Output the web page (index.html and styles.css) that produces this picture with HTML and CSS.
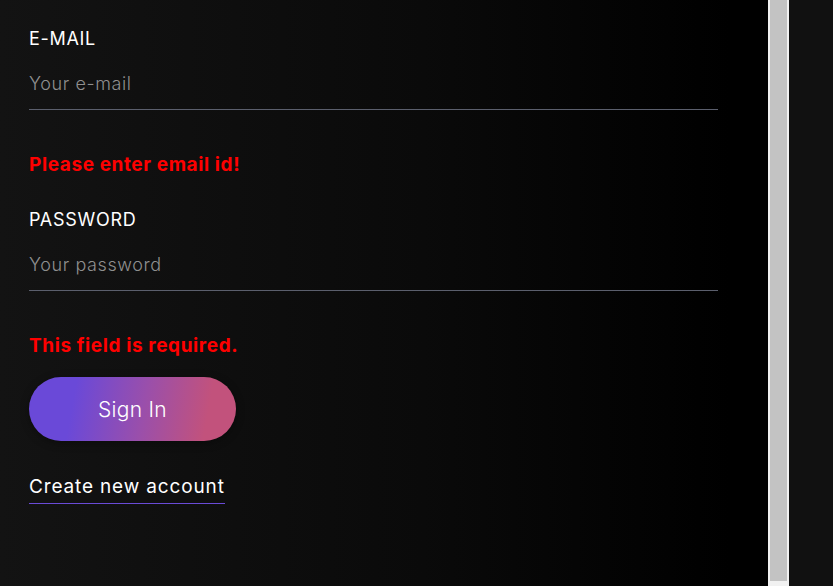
FILE: index.html
```html
<!DOCTYPE html>
<html lang="en">
<head>
<meta charset="utf-8">
<title>Sign In</title>
<link rel="stylesheet" href="styles.css">
</head>
<body>
<div class="page">
  <main class="panel">
    <form class="form" novalidate>
      <div class="field">
        <label class="label" for="email">E-MAIL</label>
        <input class="input" id="email" type="email" placeholder="Your e-mail">
      </div>
      <p class="error error-email">Please enter email id!</p>
      <div class="field field-pass">
        <label class="label" for="password">PASSWORD</label>
        <input class="input" id="password" type="password" placeholder="Your password">
      </div>
      <p class="error error-pass">This field is required.</p>
      <button class="btn" type="button">Sign In</button>
      <a class="link" href="#">Create new account</a>
    </form>
  </main>
  <div class="scrollbar"><div class="thumb"></div></div>
  <aside class="side"></aside>
</div>
</body>
</html>
```
FILE: styles.css
```css
* { box-sizing: border-box; }
html, body { margin: 0; padding: 0; height: 100%; }
body {
  background: #111111;
  font-family: Inter, "Noto Sans", sans-serif;
  overflow: hidden;
}
.page {
  display: flex;
  height: 586px;
}
.panel {
  width: 768px;
  flex: 0 0 768px;
  background: linear-gradient(to right, #131313 0%, #0a0a0a 55%, #000000 95%);
  padding: 28px 0 0 29px;
}
.form {
  width: 689px;
  display: flex;
  flex-direction: column;
  align-items: flex-start;
}
.field {
  width: 100%;
  display: flex;
  flex-direction: column;
}
.label {
  font-size: 18px;
  line-height: 22px;
  color: #ffffff;
  font-weight: 400;
  letter-spacing: 0.7px;
}
.input {
  margin-top: 8px;
  height: 52px;
  width: 100%;
  background: transparent;
  border: 0;
  border-bottom: 1px solid #5b5f6d;
  padding: 0;
  font-family: inherit;
  font-size: 18px;
  font-weight: 300;
  letter-spacing: 0.6px;
  color: #ffffff;
  outline: none;
}
.input::placeholder {
  color: #8f8f8f;
  opacity: 1;
}
.error {
  margin: 43px 0 0;
  color: #ff0000;
  font-size: 19px;
  line-height: 24px;
  font-weight: 700;
  letter-spacing: 0.6px;
}
.field-pass { margin-top: 32px; }
.btn {
  margin-top: 19px;
  width: 207px;
  height: 64px;
  border: 0;
  border-radius: 32px;
  background: linear-gradient(100deg, #6a49d8 22%, #9a4fab 55%, #c2527c 85%);
  color: #ffffff;
  font-family: inherit;
  font-size: 21px;
  font-weight: 300;
  letter-spacing: 0.3px;
  cursor: pointer;
  box-shadow: 0 2px 8px rgba(0, 0, 0, 0.35);
}
.link {
  margin-top: 34px;
  color: #ffffff;
  text-decoration: none;
  font-size: 19px;
  line-height: 24px;
  font-weight: 400;
  letter-spacing: 0.85px;
  padding-bottom: 4px;
  border-bottom: 1px solid #6a4bd7;
}
.scrollbar {
  flex: 0 0 21px;
  background: #f1f1f1;
  padding: 0 2px 5px;
}
.thumb {
  height: 100%;
  background: #c3c3c3;
}
.side {
  flex: 1;
  background: #111111;
}
```
